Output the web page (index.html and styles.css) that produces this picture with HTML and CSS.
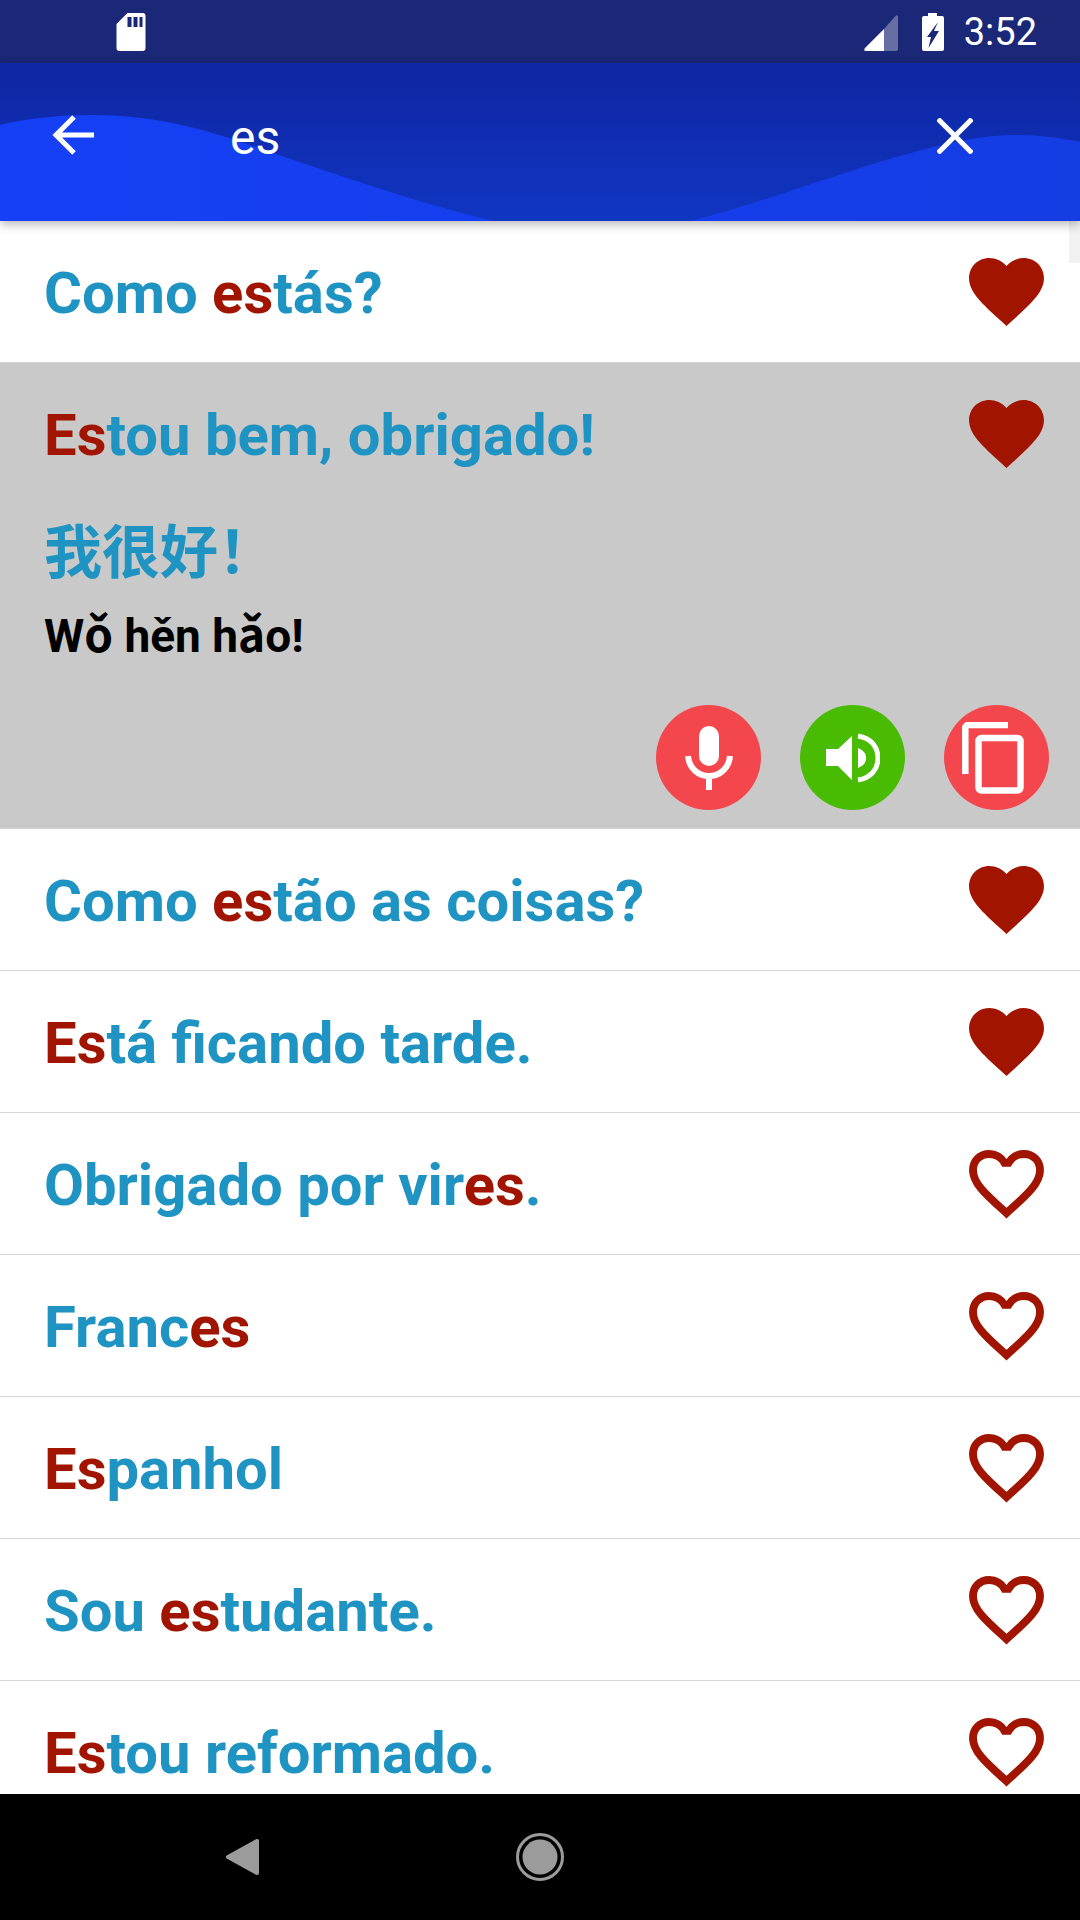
FILE: index.html
```html
<!DOCTYPE html>
<html lang="pt">
<head>
    <meta charset="UTF-8" />
    <title>Phrasebook search</title>
    <link rel="stylesheet" href="styles.css">
</head>
<body>
    <div class="screen">
        <div class="statusbar">
            <svg class="sd-icon" width="31" height="38" viewBox="0 0 30 38">
                <path fill="#fff" d="M11 0H26a3 3 0 0 1 3 3V35a3 3 0 0 1-3 3H3a3 3 0 0 1-3-3V11Z" />
                <path fill="#1b2777" d="M11 4h4v10h-4zM17 4h4v10h-4zM23 4h3v10h-3z" />
            </svg>
            <div class="status-right">
                <svg width="36" height="36" viewBox="0 0 34 36">
                    <path fill="#fff" opacity="0.33" d="M34 2V34a2 2 0 0 1-2 2H20V14L31 1.500Q34-1 34 2Z" />
                    <path fill="#fff" d="M20 14V36H2Q-1 36 1 33Z" />
                </svg>
                <svg width="22" height="38" viewBox="0 0 22 38">
                    <path fill="#fff" d="M6 0H15V3H20a2 2 0 0 1 2 2V36a2 2 0 0 1-2 2H2a2 2 0 0 1-2-2V5a2 2 0 0 1 2-2H6Z" />
                    <path fill="#1b2777" d="M16 9L5 24H9L6.500 35L17 18H12Z" />
                </svg>
                <span class="clock">3:52</span>
            </div>
        </div>

        <header class="toolbar">
            <svg class="wave" width="1080" height="158" viewBox="0 0 1080 158" preserveAspectRatio="none">
                <defs>
                    <linearGradient id="waveDark" x1="0" y1="0" x2="0" y2="1">
                        <stop offset="0" stop-color="#0f25a2" />
                        <stop offset="1" stop-color="#1036c2" />
                    </linearGradient>
                    <linearGradient id="waveLight" x1="0" y1="0" x2="1" y2="0">
                        <stop offset="0" stop-color="#1540f6" />
                        <stop offset="1" stop-color="#153de4" />
                    </linearGradient>
                </defs>
                <rect width="1080" height="158" fill="url(#waveDark)" />
                <path fill="url(#waveLight)" d="M0 62C30 55 60 52 93 52C170 52 230 75 279 92C340 113 420 140 492 158H691C800 130 930 72 1015 72C1040 72 1060 75 1080 79V158H0Z" />
            </svg>
            <svg class="back-icon" width="42" height="42" viewBox="0 0 42 42">
                <path fill="none" stroke="#fff" stroke-width="5" d="M42 21H4M22 3L4 21L22 39" />
            </svg>
            <span class="query">es</span>
            <svg class="close-icon" width="36" height="36" viewBox="0 0 36 36">
                <path fill="none" stroke="#fff" stroke-width="5" d="M1 1L35 35M35 1L1 35" />
            </svg>
        </header>

        <main class="list">
            <div class="scroll-mark"></div>

            <div class="row">
                <div class="phrase">Como <em>es</em>tás?</div>
                <svg class="heart" viewBox="0 0 76 70"><use href="#heartFull" /></svg>
            </div>

            <div class="row open">
                <div class="row-top">
                    <div class="phrase"><em>Es</em>tou bem, obrigado!</div>
                    <svg class="heart" viewBox="0 0 76 70"><use href="#heartFull" /></svg>
                </div>
                <div class="hanzi">我很好！</div>
                <div class="pinyin">Wǒ hěn hǎo!</div>
                <div class="actions">
                    <div class="round-btn red">
                        <svg width="48" height="64" viewBox="0 0 48 64">
                            <rect x="14" y="0" width="20" height="40" rx="10" fill="#fff" />
                            <path fill="none" stroke="#fff" stroke-width="6" d="M3 30C4 42 13 50 24 50C35 50 44 42 45 30M24 50V64" />
                        </svg>
                    </div>
                    <div class="round-btn green">
                        <svg width="54" height="50" viewBox="0 0 54 50">
                            <path fill="#fff" d="M0 16H12L26 3V47L12 33H0Z" />
                            <path fill="#fff" d="M32 15C37 17 40 20 40 25C40 30 37 33 32 35Z" />
                            <path fill="none" stroke="#fff" stroke-width="5" d="M32 3C45 5 52 14 52 25C52 36 45 45 32 47" />
                        </svg>
                    </div>
                    <div class="round-btn red">
                        <svg width="70" height="72" viewBox="0 0 70 72">
                            <path fill="none" stroke="#fff" stroke-width="6.500" d="M3.300 52V6a3 3 0 0 1 3-3H46" />
                            <rect x="16.500" y="16" width="42" height="52.500" rx="3" fill="none" stroke="#fff" stroke-width="6.500" />
                        </svg>
                    </div>
                </div>
            </div>

            <div class="row">
                <div class="phrase">Como <em>es</em>tão as coisas?</div>
                <svg class="heart" viewBox="0 0 76 70"><use href="#heartFull" /></svg>
            </div>
            <div class="row">
                <div class="phrase"><em>Es</em>tá ficando tarde.</div>
                <svg class="heart" viewBox="0 0 76 70"><use href="#heartFull" /></svg>
            </div>
            <div class="row">
                <div class="phrase">Obrigado por vir<em>es</em>.</div>
                <svg class="heart" viewBox="0 0 76 70"><use href="#heartLine" /></svg>
            </div>
            <div class="row">
                <div class="phrase">Franc<em>es</em></div>
                <svg class="heart" viewBox="0 0 76 70"><use href="#heartLine" /></svg>
            </div>
            <div class="row">
                <div class="phrase"><em>Es</em>panhol</div>
                <svg class="heart" viewBox="0 0 76 70"><use href="#heartLine" /></svg>
            </div>
            <div class="row">
                <div class="phrase">Sou <em>es</em>tudante.</div>
                <svg class="heart" viewBox="0 0 76 70"><use href="#heartLine" /></svg>
            </div>
            <div class="row">
                <div class="phrase"><em>Es</em>tou reformado.</div>
                <svg class="heart" viewBox="0 0 76 70"><use href="#heartLine" /></svg>
            </div>
        </main>

        <div class="navbar">
            <svg class="nav-back" width="34" height="36" viewBox="0 0 34 36">
                <path fill="#9b9b9b" stroke="#9b9b9b" stroke-width="4" stroke-linejoin="round" d="M2 18L31 2V34Z" />
            </svg>
            <svg class="nav-home" width="48" height="48" viewBox="0 0 48 48">
                <circle cx="24" cy="24" r="22.500" fill="none" stroke="#9b9b9b" stroke-width="3" />
                <circle cx="24" cy="24" r="17.500" fill="#9b9b9b" />
            </svg>
        </div>
    </div>

    <svg class="defs" width="0" height="0">
        <symbol id="heartFull" viewBox="0 0 76 70">
            <path fill="#a01400" d="M38 69L32.500 64C13 46 0 34.500 0 20.500C0 9 9 0 20.500 0C27 0 33.500 3 38 8C42.500 3 49 0 55.500 0C67 0 76 9 76 20.500C76 34.500 63 46 43.500 64Z" />
        </symbol>
        <symbol id="heartLine" viewBox="0 0 76 70">
            <path fill="none" stroke="#a01400" stroke-width="8" stroke-linejoin="miter" d="M38 64L35 61.300C15.500 44 4 33 4 20.500C4 11 11 4 20.500 4C27 4 33 7.500 36 13H40C43 7.500 49 4 55.500 4C65 4 72 11 72 20.500C72 33 60.500 44 41 61.300Z" />
        </symbol>
    </svg>
</body>
</html>
```

FILE: styles.css
```css
* {
    box-sizing: border-box;
}

body {
    margin: 0;
    font-family: Roboto, 'Noto Sans CJK SC', sans-serif;
    background: #fff;
}

.screen {
    width: 1080px;
    height: 1920px;
    display: flex;
    flex-direction: column;
    overflow: hidden;
}

.statusbar {
    height: 63px;
    flex: none;
    background: #1b2777;
    display: flex;
    align-items: center;
    justify-content: space-between;
    padding: 0 43px 0 116px;
}

.status-right {
    display: flex;
    align-items: center;
    gap: 20px;
}

.status-right svg:first-child {
    margin-top: 2px;
    margin-right: 3px;
}

.clock {
    color: #fff;
    font-size: 38px;
    padding-top: 1px;
}

.toolbar {
    position: relative;
    z-index: 2;
    height: 158px;
    flex: none;
    display: flex;
    align-items: center;
    padding: 0 107px 0 52px;
    box-shadow: 0 3px 10px rgba(0, 0, 0, 0.3);
}

.wave {
    position: absolute;
    left: 0;
    top: 0;
}

.back-icon, .close-icon, .query {
    position: relative;
}

.back-icon {
    margin-top: -15px;
}

.close-icon {
    margin-top: -13px;
    margin-left: auto;
}

.query {
    color: #fff;
    font-size: 48px;
    margin-left: 136px;
    margin-top: -10px;
}

.list {
    position: relative;
    flex: 1;
    overflow: hidden;
}

.scroll-mark {
    position: absolute;
    right: 0;
    top: 0;
    width: 11px;
    height: 42px;
    background: #f2f2f2;
}

.row {
    height: 142px;
    padding: 0 36px 0 44px;
    border-bottom: 1px solid #d4d4d4;
    display: flex;
    align-items: center;
    justify-content: space-between;
}

.row.open {
    height: 466px;
    background: #c9c9c9;
    display: block;
    padding: 0;
}

.row-top {
    height: 141px;
    padding: 0 36px 0 44px;
    display: flex;
    align-items: center;
    justify-content: space-between;
}

.phrase {
    font-size: 58px;
    font-weight: 700;
    padding-top: 2px;
    color: #1f94c2;
}

.phrase em {
    font-style: normal;
    color: #a01400;
}

.heart {
    width: 75px;
    height: 69px;
    margin-top: 1px;
}

.hanzi {
    padding-left: 44px;
    font-size: 58px;
    font-weight: 700;
    line-height: 70px;
    margin-top: 9px;
    color: #1f94c2;
    font-family: 'Noto Sans CJK SC', sans-serif;
}

.pinyin {
    padding-left: 44px;
    font-size: 46px;
    font-weight: 700;
    line-height: 52px;
    margin-top: 27px;
    color: #000;
}

.actions {
    display: flex;
    justify-content: flex-end;
    gap: 39px;
    padding-right: 31px;
    margin-top: 43px;
}

.round-btn {
    width: 105px;
    height: 105px;
    border-radius: 50%;
    display: flex;
    align-items: center;
    justify-content: center;
}

.round-btn.red {
    background: #f3474d;
}

.round-btn.green {
    background: #48bb02;
}

.navbar {
    height: 126px;
    flex: none;
    background: #000;
    display: flex;
    align-items: center;
    padding-left: 226px;
    gap: 256px;
}

.defs {
    position: absolute;
}
```
